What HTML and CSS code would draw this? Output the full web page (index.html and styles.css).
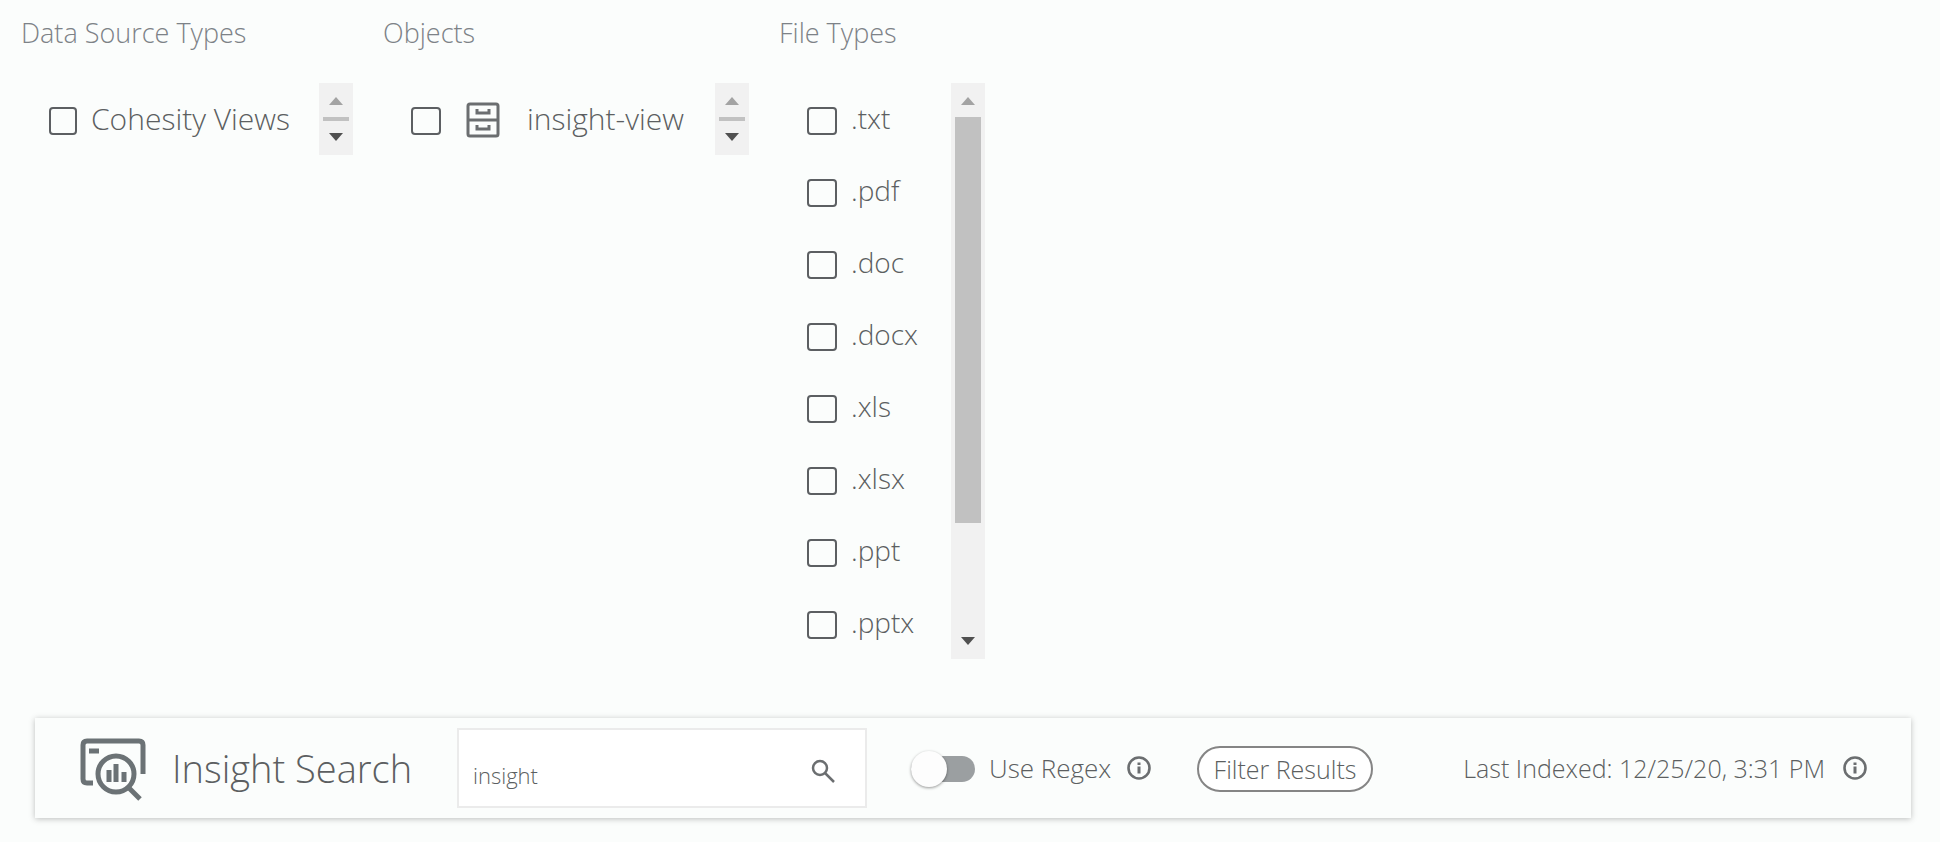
FILE: index.html
```
<!DOCTYPE html>
<html lang="en">
<head>
    <meta charset="UTF-8">
    <meta name="viewport" content="width=device-width, initial-scale=1.0">
    <title>Insight Search</title>
    <link rel="stylesheet" href="styles.css">
</head>
<body>
    <main class="page">
        <!-- Filters -->
        <section class="filters">
            <fieldset class="filter filter-sources">
                <legend class="filter-title">Data Source Types</legend>
                <div class="filter-body">
                    <ul class="filter-list">
                        <li><label class="option"><input type="checkbox" class="check check-narrow">Cohesity Views</label></li>
                    </ul>
                    <div class="scrollbar">
                        <button type="button" class="scroll-up" aria-label="Scroll up"></button>
                        <span class="thumb"></span>
                        <button type="button" class="scroll-down" aria-label="Scroll down"></button>
                    </div>
                </div>
            </fieldset>

            <fieldset class="filter filter-objects">
                <legend class="filter-title">Objects</legend>
                <div class="filter-body">
                    <ul class="filter-list">
                        <li>
                            <label class="option">
                                <input type="checkbox" class="check">
                                <svg class="view-icon" viewBox="0 0 36 38" fill="none" stroke="#6b6e70" stroke-width="3">
                                    <rect x="3" y="3" width="30" height="32" rx="2"/>
                                    <path d="M3 19h30"/>
                                    <path d="M12 8v4h12V8M12 24v4h12v-4"/>
                                </svg>
                                insight-view
                            </label>
                        </li>
                    </ul>
                    <div class="scrollbar">
                        <button type="button" class="scroll-up" aria-label="Scroll up"></button>
                        <span class="thumb"></span>
                        <button type="button" class="scroll-down" aria-label="Scroll down"></button>
                    </div>
                </div>
            </fieldset>

            <fieldset class="filter filter-files">
                <legend class="filter-title">File Types</legend>
                <div class="filter-body">
                    <ul class="filter-list">
                        <li><label class="option"><input type="checkbox" class="check">.txt</label></li>
                        <li><label class="option"><input type="checkbox" class="check">.pdf</label></li>
                        <li><label class="option"><input type="checkbox" class="check">.doc</label></li>
                        <li><label class="option"><input type="checkbox" class="check">.docx</label></li>
                        <li><label class="option"><input type="checkbox" class="check">.xls</label></li>
                        <li><label class="option"><input type="checkbox" class="check">.xlsx</label></li>
                        <li><label class="option"><input type="checkbox" class="check">.ppt</label></li>
                        <li><label class="option"><input type="checkbox" class="check">.pptx</label></li>
                    </ul>
                    <div class="scrollbar">
                        <button type="button" class="scroll-up" aria-label="Scroll up"></button>
                        <span class="track"><span class="thumb"></span></span>
                        <button type="button" class="scroll-down" aria-label="Scroll down"></button>
                    </div>
                </div>
            </fieldset>
        </section>

        <!-- Search bar -->
        <form class="search-bar">
            <svg class="logo" viewBox="0 0 66 64" fill="none" stroke="#6b7275" stroke-width="5">
                <path d="M13 45H7q-4 0-4-4V7q0-4 4-4h52q4 0 4 4v29"/>
                <path d="M9 13h10"/>
                <circle cx="36" cy="36" r="18"/>
                <path d="M29 44V32M36 44V26M44 44V34" stroke-width="5"/>
                <path d="M48 49l12 12"/>
            </svg>
            <h1 class="title">Insight Search</h1>

            <div class="search-box">
                <input type="text" class="search-input" value="insight" aria-label="Search">
                <button type="submit" class="icon-button" aria-label="Search">
                    <svg class="icon" viewBox="0 0 24 24" fill="none" stroke="#6b6e70" stroke-width="2.5">
                        <circle cx="9" cy="9" r="7"/>
                        <path d="M14 14l9 9"/>
                    </svg>
                </button>
            </div>

            <label class="regex">
                <input type="checkbox" class="toggle" role="switch">
                Use Regex
            </label>
            <svg class="icon info" viewBox="0 0 24 24" fill="none" stroke="#6b6e70">
                <circle cx="12" cy="12" r="10.5" stroke-width="2.6"/>
                <path d="M12 10.500v7M12 6.500v2.500" stroke-width="3"/>
            </svg>

            <button type="button" class="filter-button">Filter Results</button>

            <p class="indexed">Last Indexed: 12/25/20, 3:31 PM</p>
            <svg class="icon" viewBox="0 0 24 24" fill="none" stroke="#6b6e70">
                <circle cx="12" cy="12" r="10.5" stroke-width="2.6"/>
                <path d="M12 10.500v7M12 6.500v2.500" stroke-width="3"/>
            </svg>
        </form>
    </main>
</body>
</html>
```
FILE: styles.css
```
* {
    margin: 0;
    padding: 0;
    box-sizing: border-box;
}

body {
    font-family: 'Open Sans', 'Noto Sans', sans-serif;
    font-weight: 300;
    background: #fbfdfc;
    color: #5c5f61;
}

button,
input {
    font: inherit;
    color: inherit;
}

svg {
    flex: none;
}

/* Filters */
.filters {
    display: flex;
    align-items: flex-start;
    gap: 30px;
    padding: 15px 20px 0 21px;
    min-height: 718px;
}

.filter {
    border: none;
}

.filter-sources {
    width: 332px;
}

.filter-objects {
    width: 366px;
}

.filter-files {
    width: 206px;
}

.filter-title {
    font-size: 27px;
    line-height: 36px;
    color: #7d8287;
    white-space: nowrap;
}

.filter-body {
    display: flex;
    margin-top: 32px;
}

.filter-list {
    flex: 1;
    list-style: none;
    padding-left: 28px;
}

.option {
    display: flex;
    align-items: center;
    height: 72px;
    padding-bottom: 2px;
    font-size: 30px;
    white-space: nowrap;
}

.filter-files .option {
    font-size: 28px;
}

.check {
    appearance: none;
    flex: none;
    width: 30px;
    height: 28px;
    margin: 6px 14px 0 0;
    border: 2px solid #5c5f62;
    border-radius: 4px;
}

.check-narrow {
    width: 28px;
}

.view-icon {
    width: 36px;
    height: 38px;
    margin: 4px 26px 0 10px;
}

.scrollbar {
    display: flex;
    flex-direction: column;
    align-items: center;
    width: 34px;
    background: #f1f1f1;
}

.scrollbar button {
    display: flex;
    align-items: flex-start;
    justify-content: center;
    width: 34px;
    height: 34px;
    border: none;
    background: none;
}

.scrollbar .scroll-up {
    padding-top: 14px;
}

.scrollbar .scroll-down {
    padding-top: 12px;
}

.scroll-up::before,
.scroll-down::before {
    content: "";
    border: 7px solid transparent;
}

.scroll-up::before {
    border-top: none;
    border-bottom: 8px solid #a3a3a3;
}

.scroll-down::before {
    border-bottom: none;
    border-top: 8px solid #505050;
}

.thumb {
    width: 26px;
    height: 4px;
    background: #c1c1c1;
}

.track {
    flex: 1;
}

.track .thumb {
    display: block;
    height: 80%;
}

/* Search bar */
.search-bar {
    display: flex;
    align-items: center;
    height: 100px;
    margin: 0 29px 24px 35px;
    padding: 0 44px 0 45px;
    background: #fbfdfc;
    box-shadow: 0 1px 6px rgba(0, 0, 0, 0.25);
    font-size: 26px;
    white-space: nowrap;
}

.logo {
    width: 66px;
    height: 64px;
    margin-top: 4px;
}

.title {
    width: 284px;
    padding-left: 26px;
    font-size: 38px;
    font-weight: 300;
}

.search-box {
    display: flex;
    align-items: center;
    width: 410px;
    height: 80px;
    margin-left: 27px;
    padding: 0 30px 0 14px;
    border: 2px solid #ebebeb;
    background: #ffffff;
}

.search-input {
    flex: 1;
    min-width: 0;
    padding-top: 14px;
    border: none;
    outline: none;
    background: none;
    font-size: 22px;
}

.icon-button {
    display: flex;
    padding-top: 6px;
    border: none;
    background: none;
}

.icon {
    width: 24px;
    height: 24px;
}

.regex {
    display: flex;
    align-items: center;
    gap: 14px;
    width: 242px;
    margin-left: 44px;
}

.toggle {
    appearance: none;
    display: flex;
    align-items: center;
    flex: none;
    width: 64px;
    height: 26px;
    margin-top: 2px;
    border-radius: 13px;
    background: #9b9fa1;
}

.toggle::before {
    content: "";
    width: 36px;
    height: 36px;
    border-radius: 50%;
    background: #fdfdfd;
    box-shadow: 0 1px 3px rgba(0, 0, 0, 0.4);
}

.info {
    margin-left: -26px;
}

.filter-button {
    width: 176px;
    height: 46px;
    margin: 2px 0 0 46px;
    border: 2px solid #858585;
    border-radius: 23px;
    background: #ffffff;
    font-size: 25px;
    line-height: 36px;
}

.indexed {
    margin: 0 18px 0 auto;
    font-size: 25px;
}
```
